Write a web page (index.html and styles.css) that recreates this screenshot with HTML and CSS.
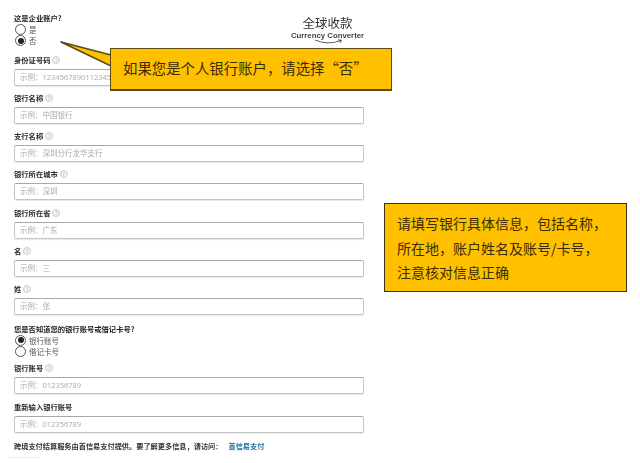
FILE: index.html
```html
<!DOCTYPE html>
<html lang="zh-CN">
<head>
<meta charset="utf-8">
<title>银行信息</title>
<link rel="stylesheet" href="styles.css">
</head>
<body>
<main class="form">
  <div class="question">这是企业账户?</div>
  <div class="radio-group top">
    <div class="radio"><span class="dot"></span>是</div>
    <div class="radio"><span class="dot on"></span>否</div>
  </div>
  <div class="field"><div class="label">身份证号码<span class="help">?</span></div><div class="input">示例&#xFF1A;12345678901123456</div></div>
  <div class="field"><div class="label">银行名称<span class="help">?</span></div><div class="input">示例&#xFF1A;中国银行</div></div>
  <div class="field"><div class="label">支行名称<span class="help">?</span></div><div class="input">示例&#xFF1A;深圳分行龙华支行</div></div>
  <div class="field"><div class="label">银行所在城市<span class="help">?</span></div><div class="input">示例&#xFF1A;深圳</div></div>
  <div class="field"><div class="label">银行所在省<span class="help">?</span></div><div class="input">示例&#xFF1A;广东</div></div>
  <div class="field"><div class="label">名<span class="help">?</span></div><div class="input">示例&#xFF1A;三</div></div>
  <div class="field"><div class="label">姓<span class="help">?</span></div><div class="input">示例&#xFF1A;张</div></div>
  <div class="question second">您是否知道您的银行账号或借记卡号?</div>
  <div class="radio-group bottom">
    <div class="radio"><span class="dot on"></span>银行账号</div>
    <div class="radio"><span class="dot"></span>借记卡号</div>
  </div>
  <div class="field"><div class="label">银行账号<span class="help">?</span></div><div class="input">示例&#xFF1A;012356789</div></div>
  <div class="field"><div class="label">重新输入银行账号</div><div class="input">示例&#xFF1A;012356789</div></div>
  <p class="note">跨境支付结算服务由首信易支付提供。要了解更多信息&#xFF0C;请访问&#xFF1A;<a class="link">首信易支付</a></p>
  <div class="divider"></div>
</main>

<div class="logo">
  <div class="logo-cn">全球收款</div>
  <div class="logo-en">Currency Converter</div>
  <svg class="logo-smile" width="30" height="6" viewBox="0 0 30 6"><path d="M1 1Q14 6.500 27 1.500M24 1L27.500 1.200L26 4" fill="none" stroke="#333" stroke-width="0.800"/></svg>
</div>

<svg class="tail" width="56" height="30" viewBox="0 0 56 30"><path d="M1 1L51 14V25Z" fill="#ffc000" stroke="#5a4a14" stroke-width="1.500" stroke-linejoin="round"/></svg>
<div class="callout">如果您是个人银行账户&#xFF0C;请选择&#x201C;否&#x201D;</div>
<div class="infobox">请填写银行具体信息&#xFF0C;包括名称&#xFF0C;<br>所在地&#xFF0C;账户姓名及账号/卡号&#xFF0C;<br>注意核对信息正确</div>
</body>
</html>
```

FILE: styles.css
```css
* { box-sizing: border-box; }
html, body { margin: 0; height: 463px; overflow: hidden; background: #fff; }
body { position: relative; font-family: "Noto Sans CJK SC", "Liberation Sans", sans-serif; color: #333; }
.form { width: 364px; padding: 12px 0 0 14px; display: flex; flex-direction: column; filter: blur(0.35px); }
.question { font-size: 7.300px; font-weight: 700; line-height: 12px; height: 12px; color: #222; white-space: nowrap; }
.question.second { margin-top: 2.400px; }
.radio-group { display: flex; flex-direction: column; margin-left: 1px; height: 22px; }
.radio-group.top { height: 28.500px; }
.radio-group.bottom { margin-bottom: 4.300px; }
.radio { display: flex; align-items: center; height: 11px; font-size: 7.500px; color: #555; gap: 3px; }
.dot { width: 11px; height: 11px; border: 1px solid #555; border-radius: 50%; background: #fff; flex: none; display: flex; align-items: center; justify-content: center; }
.dot.on::after { content: ""; width: 6px; height: 6px; border-radius: 50%; background: #222; }
.field { height: 38.300px; display: flex; flex-direction: column; }
.label { height: 16px; padding-bottom: 2px; font-size: 7.300px; font-weight: 700; color: #2a2a2a; display: flex; align-items: center; gap: 2px; }
.help { width: 8px; height: 8px; border: 1px solid #ccc; border-radius: 50%; background: #f2f2f2; color: #bbb; font-size: 5px; font-weight: 400; line-height: 6px; text-align: center; }
.input { height: 17px; border: 1px solid #c4c4c4; border-top-color: #a8a8a8; border-radius: 2px; font-family: "Open Sans", "Noto Sans CJK SC", sans-serif; font-size: 7.500px; line-height: 15px; color: #aaa; padding-left: 5px; box-shadow: 0 1px 1px #e8e8e8; white-space: nowrap; overflow: hidden; }
.note { margin: 2px 0 0; font-size: 7.200px; font-weight: 700; line-height: 12px; color: #333; white-space: nowrap; }
.link { color: #1a6f9e; margin-left: 6px; }
.divider { width: 32px; height: 1px; margin: 5px 0 0 -6px; background: #eee; }
.logo { position: absolute; left: 290px; top: 15px; width: 75px; text-align: center; filter: blur(0.3px); }
.logo-cn { font-size: 12.500px; line-height: 16px; font-weight: 400; color: #333; }
.logo-en { font-family: "Liberation Sans", sans-serif; font-size: 7.800px; line-height: 9px; font-weight: 700; color: #444; white-space: nowrap; }
.logo-smile { display: block; margin: -1px 0 0 24px; }
.tail { position: absolute; left: 60px; top: 41px; }
.callout { position: absolute; left: 110px; top: 48px; width: 282px; height: 42px; background: #ffc000; border: 1px solid #5a4a14; box-shadow: 0 1px 0 #5a4a14; font-size: 14.400px; line-height: 38px; color: #3a2c05; padding-left: 12px; white-space: nowrap; }
.infobox { position: absolute; left: 384px; top: 203px; width: 243px; height: 89px; background: #ffc000; border: 1px solid #3e3412; font-size: 14px; line-height: 24.500px; color: #3a2c05; padding: 7px 0 0 12px; white-space: nowrap; }
```
